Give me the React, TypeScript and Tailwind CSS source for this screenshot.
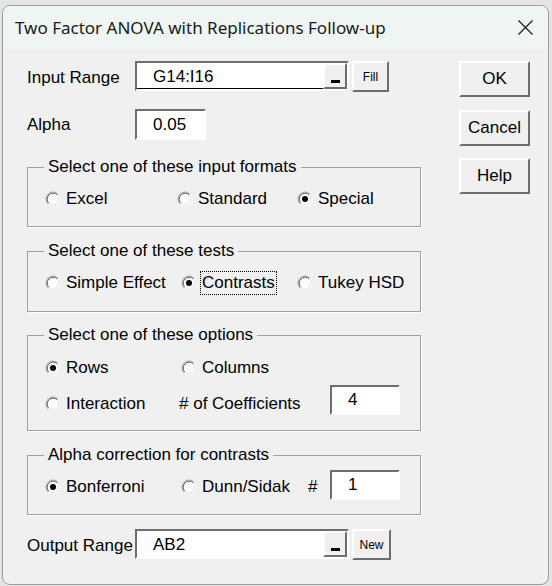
import { ReactNode } from 'react';

const Radio = ({ checked }: { checked?: boolean }) => (
  <svg width="16" height="16" viewBox="0 0 16 16" className="shrink-0">
    <circle cx="8" cy="8" r="7" fill="#fff" />
    <path d="M3.05 12.95 A7 7 0 0 1 12.95 3.05" fill="none" stroke="#a0a0a0" />
    <path d="M12.95 3.05 A7 7 0 0 1 3.05 12.95" fill="none" stroke="#f8f8f8" />
    <path d="M3.76 12.24 A6 6 0 0 1 12.24 3.76" fill="none" stroke="#5a5a5a" />
    <path d="M12.24 3.76 A6 6 0 0 1 3.76 12.24" fill="none" stroke="#e3e3e3" />
    {checked && <circle cx="8" cy="8" r="3" fill="#000" />}
  </svg>
);

interface OptionProps {
  label: string;
  checked?: boolean;
  focused?: boolean;
  className?: string;
}

const Option = ({ label, checked, focused, className = '' }: OptionProps) => (
  <div className={`flex items-center gap-[3px] ${className}`}>
    <Radio checked={checked} />
    <span
      className={`border px-[1px] leading-[22px] ${focused ? 'border-dotted border-black' : 'border-transparent'}`}
    >
      {label}
    </span>
  </div>
);

const Group = ({ title, className, children }: { title: string; className: string; children: ReactNode }) => (
  <fieldset className={`w-[394px] border border-[#a0a0a0] shadow-[1px_1px_0_#fff] ${className}`}>
    <legend className="ml-[16px] px-[4px] leading-[20px]">{title}</legend>
    {children}
  </fieldset>
);

const TextBox = ({ value, className = '' }: { value: string; className?: string }) => (
  <div
    className={`flex items-center border-2 border-t-[#6d6d6d] border-l-[#6d6d6d] border-r-white border-b-white bg-white pl-[16px] ${className}`}
  >
    {value}
  </div>
);

const RefEdit = ({ value, underline }: { value: string; underline?: boolean }) => (
  <div className="flex h-[30px] w-[214px] border-2 border-t-[#6d6d6d] border-l-[#6d6d6d] border-r-white border-b-white bg-white">
    <div className={`flex flex-1 items-center pl-[16px] pt-[2px] ${underline ? 'border-b border-black' : ''}`}>
      {value}
    </div>
    <div className="flex w-[24px] items-end justify-center border-2 border-t-white border-l-white border-r-[#6d6d6d] border-b-[#6d6d6d] bg-[#f0f0f0] pb-[4px]">
      <div className="h-[3px] w-[9px] bg-black" />
    </div>
  </div>
);

const SmallButton = ({ label, className }: { label: string; className: string }) => (
  <div
    className={`flex h-[31px] items-center justify-center border-2 border-t-white border-l-white border-r-[#6d6d6d] border-b-[#6d6d6d] bg-[#f0f0f0] text-[12px] ${className}`}
  >
    {label}
  </div>
);

const DialogButton = ({ label, className = '' }: { label: string; className?: string }) => (
  <div
    className={`flex h-[36px] w-[71px] items-center justify-center border-2 border-t-white border-l-white border-r-[#6d6d6d] border-b-[#6d6d6d] bg-[#f0f0f0] ${className}`}
  >
    {label}
  </div>
);

const App = () => {
  return (
    <div className="h-[586px] w-[552px] overflow-hidden bg-[#e4e4e4] pl-[2px] pt-[5px]">
      <div className="flex h-[580px] w-[547px] flex-col overflow-hidden rounded-[8px] border border-[#9c9c9c] bg-[#f0f0f0] font-['Liberation_Sans',Arial,sans-serif] text-[17px] text-black">
        <div className="flex h-[43px] shrink-0 items-center justify-between bg-[#eef5f3] pl-[12px] pr-[15px]">
          <span className="font-['Noto_Sans',sans-serif] text-[17px] text-[#1a1a1a]">
            Two Factor ANOVA with Replications Follow-up
          </span>
          <svg width="15" height="15" viewBox="0 0 15 15">
            <path d="M0.5 0.5 L14.5 14.5 M14.5 0.5 L0.5 14.5" stroke="#1f1f1f" strokeWidth="1.3" />
          </svg>
        </div>

        <div className="flex flex-1 pt-[12px]">
          <div className="flex flex-1 flex-col pl-[24px]">
            <div className="flex h-[31px] items-start">
              <span className="w-[108px] pt-[2px] leading-[30px]">Input Range</span>
              <RefEdit value="G14:I16" underline />
              <SmallButton label="Fill" className="ml-[3px] w-[37px]" />
            </div>

            <div className="mt-[17px] flex h-[31px] items-center">
              <span className="w-[108px] pt-[1px]">Alpha</span>
              <TextBox value="0.05" className="h-[31px] w-[71px]" />
            </div>

            <Group title="Select one of these input formats" className="mt-[17px] h-[70px]">
              <div className="mt-[12px] flex h-[20px] items-center pl-[17px]">
                <Option label="Excel" className="w-[132px]" />
                <Option label="Standard" className="w-[120px]" />
                <Option label="Special" checked />
              </div>
            </Group>

            <Group title="Select one of these tests" className="mt-[14px] h-[71px]">
              <div className="mt-[12px] flex h-[20px] items-center pl-[17px]">
                <Option label="Simple Effect" className="w-[136px]" />
                <Option label="Contrasts" checked focused className="w-[116px]" />
                <Option label="Tukey HSD" />
              </div>
            </Group>

            <Group title="Select one of these options" className="mt-[13px] h-[106px]">
              <div className="mt-[13px] flex h-[20px] items-center pl-[17px]">
                <Option label="Rows" checked className="w-[136px]" />
                <Option label="Columns" />
              </div>
              <div className="mt-[7px] flex h-[30px] items-center pl-[17px]">
                <Option label="Interaction" className="w-[134px] pt-[7px]" />
                <span className="w-[151px] pt-[8px]"># of Coefficients</span>
                <TextBox value="4" className="h-[30px] w-[70px]" />
              </div>
            </Group>

            <Group title="Alpha correction for contrasts" className="mt-[14px] h-[70px]">
              <div className="mt-[5px] flex h-[30px] items-center pl-[17px]">
                <Option label="Bonferroni" checked className="w-[136px] pt-[4px]" />
                <Option label="Dunn/Sidak" className="w-[127px] pt-[4px]" />
                <span className="w-[22px] pt-[4px]">#</span>
                <TextBox value="1" className="h-[30px] w-[70px]" />
              </div>
            </Group>

            <div className="mt-[14px] flex h-[31px] items-start">
              <span className="w-[108px] pt-[2px] leading-[30px]">Output Range</span>
              <RefEdit value="AB2" />
              <SmallButton label="New" className="ml-[3px] w-[39px]" />
            </div>
          </div>

          <div className="mr-[18px] flex w-[71px] flex-col">
            <DialogButton label="OK" className="h-[35px]" />
            <DialogButton label="Cancel" className="mt-[13px]" />
            <DialogButton label="Help" className="mt-[12px]" />
          </div>
        </div>
      </div>
    </div>
  );
};

export default App;
